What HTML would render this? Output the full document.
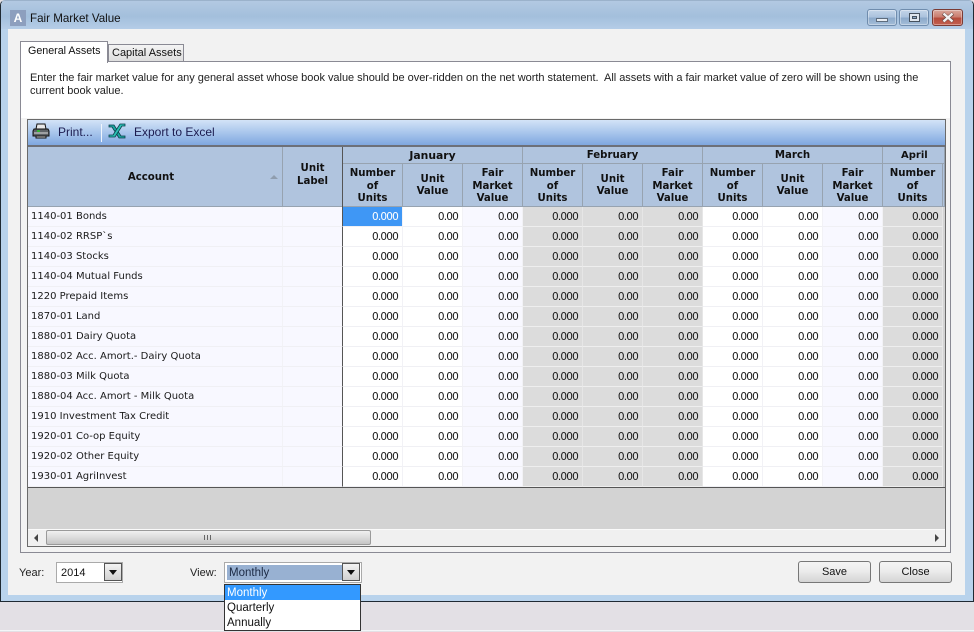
<!DOCTYPE html>
<html><head><meta charset="utf-8"><style>
html,body{margin:0;padding:0}
body{width:974px;height:632px;overflow:hidden;position:relative;background:#e3e0e5;font-family:"DejaVu Sans",sans-serif;color:#111}
div,span{position:absolute;white-space:nowrap}
.l{font-family:"Liberation Sans",sans-serif;font-size:11px;line-height:14px}
.t{font-size:12px}
.m{font-size:11.5px}
table{border-collapse:separate;border-spacing:0;table-layout:fixed;position:absolute;left:0;top:0;width:917px}
td{padding:1px 4px 0 0;box-sizing:content-box;height:18px;border-bottom:1px solid #f0f0f4;border-right:1px solid #f2f2f6;font-size:10.5px;line-height:18px;letter-spacing:-.8px;text-align:right;overflow:hidden;white-space:nowrap;background:#fff;color:#1a1a1a}
td.a{text-align:left;padding:1px 0 0 3px;background:#f8f8ff;letter-spacing:0;font-size:10px}
td.u{background:#f8f8ff}
td.k{border-right:1px solid #555}
td.g{background:#f8f8ff}
td.d{background:#dcdcdc;border-bottom:1px solid #eee;border-right:1px solid #e6e6e6}
td.s{background:#3f97f5;color:#fff}
.h{background:#b0c4de;font-weight:bold;font-size:10.2px;line-height:12.5px;text-align:center;color:#111;white-space:normal;border-right:1px solid #97a3b0;border-bottom:1px solid #97a3b0;box-sizing:border-box;display:flex;align-items:center;justify-content:center;padding-top:4px}
.mo{padding-top:3px}
.w{height:17px;top:9px;border-radius:3px;box-sizing:border-box;border:1px solid #6f8cad;box-shadow:inset 0 0 0 1px rgba(255,255,255,.35)}
.b{height:22px;border:1px solid #777;border-radius:3px;box-sizing:border-box;background:linear-gradient(#f4f4f4,#ececec 45%,#d4d4d4);text-align:center;line-height:21px;font-family:"Liberation Sans",sans-serif;font-size:11px;color:#111}
.c{width:18px;height:18px;box-sizing:border-box;border:1px solid #555;background:linear-gradient(#f3f3f3,#d0d0d0)}
.c:after{content:"";position:absolute;left:4px;top:6px;border:4px solid transparent;border-top:5px solid #111;border-bottom:0}
</style></head><body>
<div style="left:0;top:0;width:974px;height:602px;background:#b9d3ec;border:1px solid #1f2a33;border-top-color:#9bb2cb;box-sizing:border-box;border-radius:5px 5px 0 0"></div>
<div style="left:1px;top:1px;width:972px;height:28px;background:linear-gradient(#b3c9e2,#a3bfdc 55%,#b5cde7);border-radius:4px 4px 0 0"></div>
<div style="left:8px;top:29px;width:957px;height:566px;background:#f2f2f2"></div>
<div style="left:10px;top:10px;width:16px;height:16px;background:#8d9fbe;color:#fff;font:bold 12px/16px 'Liberation Sans',sans-serif;text-align:center">A</div>
<div class="l" style="left:30px;top:12px;font-size:11.6px;color:#111">Fair Market Value</div>

<div class="w" style="left:867px;width:30px;background:linear-gradient(#c3d5e9,#a9c1dc 50%,#8ba9ca 52%,#a4bdd8)"><div style="left:8px;top:8px;width:12px;height:4px;background:#e8edf3;border:1px solid #5d6c7d;box-sizing:border-box"></div></div>
<div class="w" style="left:899px;width:30px;background:linear-gradient(#c3d5e9,#a9c1dc 50%,#8ba9ca 52%,#a4bdd8)"><div style="left:9px;top:3px;width:11px;height:9px;background:#dfe6ee;border:1px solid #46525f;box-sizing:border-box"><div style="left:2px;top:2px;width:5px;height:3px;background:#8ea9c6;border:1px solid #46525f;box-sizing:border-box"></div></div></div>
<div class="w" style="left:932px;width:31px;border-color:#7b3b34;background:linear-gradient(#d9a79c,#c9796a 50%,#b44a3a 52%,#c4604f)"><svg style="position:absolute;left:8px;top:2px" width="14" height="11" viewBox="0 0 14 11"><path d="M2 1.5 L12 9.5 M12 1.5 L2 9.5" stroke="#6a4a44" stroke-width="3.6"/><path d="M2.5 1.5 L11.5 9.5 M11.5 1.5 L2.5 9.5" stroke="#f3f1f1" stroke-width="2.4"/></svg></div>

<div style="left:20px;top:61px;width:931px;height:492px;background:#f3f3f3;border:1px solid #8a8a94;box-sizing:border-box"></div>
<div style="left:21px;top:62px;width:929px;height:56px;background:#fff"></div>
<div style="left:108px;top:44px;width:76px;height:18px;background:linear-gradient(#f4f4f4,#dedede);border:1px solid #8a8a94;box-sizing:border-box"></div>
<div class="l" style="left:112px;top:46px;color:#111">Capital Assets</div>
<div style="left:20px;top:41px;width:88px;height:22px;background:#fff;border:1px solid #8a8a94;border-bottom:0;box-sizing:border-box"></div>
<div class="l" style="left:28px;top:44px;color:#111;font-size:10.7px">General Assets</div>
<div class="l" style="left:30px;top:71px;color:#222;letter-spacing:-.027px">Enter the fair market value for any general asset whose book value should be over-ridden on the net worth statement.&nbsp; All assets with a fair market value of zero will be shown using the</div>
<div class="l" style="left:30px;top:84px;color:#222">current book value.</div>

<div style="left:27px;top:119px;width:919px;height:428px;background:#d3d3d3;border:1px solid #6a6a6a;box-sizing:border-box"></div>
<div style="left:28px;top:120px;width:917px;height:25px;background:linear-gradient(#d3e3f7,#a9c6ec 50%,#7fa7df)"></div>
<div style="left:28px;top:145px;width:917px;height:2px;background:#6d7078"></div>
<svg style="position:absolute;left:32px;top:122px" width="18" height="18" viewBox="0 0 18 18"><path d="M5 2h8l1 5H4z" fill="#e8e8e8" stroke="#111"/><path d="M2 7h14l1 2v5H1V9z" fill="#5e6266" stroke="#111"/><path d="M2 11h14" stroke="#ddd"/><path d="M4 14h10v2H4z" fill="#ccc" stroke="#111"/><path d="M5 9h3" stroke="#2c2" stroke-width="1.5"/></svg>
<div class="l t" style="left:58px;top:125px;color:#1c1c50">Print...</div>
<div style="left:101px;top:124px;width:1px;height:18px;background:#f0f6fd"></div>
<svg style="position:absolute;left:108px;top:123px" width="18" height="16" viewBox="0 0 18 16"><path d="M1 2h5l7 11h4v2h-6L4 4H1z" fill="#1aa6a0" stroke="#0b3f4a" stroke-width=".8"/><path d="M12 1h5v2h-3L7 14H1v-2h4z" fill="#2bbfb3" stroke="#0b3f4a" stroke-width=".8"/></svg>
<div class="l t" style="left:134px;top:125px;color:#1c1c50">Export to Excel</div>

<div class="h" style="left:28px;top:147px;width:255px;height:60px;padding-right:8px">Account</div>
<div style="left:270px;top:175px;border:4px solid transparent;border-bottom:4px solid #8f9dae;border-top:0"></div>
<div class="h" style="left:283px;top:147px;width:60px;height:60px;padding-top:0;padding-bottom:2px">Unit<br>Label</div>
<div style="left:343px;top:147px;width:602px;height:60px;overflow:hidden">
<div class="h" style="left:0;top:0;width:180px;height:17px;font-size:10.8px;padding-top:2px">January</div>
<div class="h mo" style="left:180px;top:0;width:180px;height:17px">February</div>
<div class="h mo" style="left:360px;top:0;width:180px;height:17px">March</div>
<div class="h mo" style="left:540px;top:0;width:62px;height:17px;justify-content:flex-start;padding-left:18px;font-size:10px">April</div>
<div class="h" style="left:0;top:17px;width:60px;height:43px">Number<br>of<br>Units</div>
<div class="h" style="left:60px;top:17px;width:60px;height:43px;padding-top:2px">Unit<br>Value</div>
<div class="h" style="left:120px;top:17px;width:60px;height:43px">Fair<br>Market<br>Value</div>
<div class="h" style="left:180px;top:17px;width:60px;height:43px">Number<br>of<br>Units</div>
<div class="h" style="left:240px;top:17px;width:60px;height:43px;padding-top:2px">Unit<br>Value</div>
<div class="h" style="left:300px;top:17px;width:60px;height:43px">Fair<br>Market<br>Value</div>
<div class="h" style="left:360px;top:17px;width:60px;height:43px">Number<br>of<br>Units</div>
<div class="h" style="left:420px;top:17px;width:60px;height:43px;padding-top:2px">Unit<br>Value</div>
<div class="h" style="left:480px;top:17px;width:60px;height:43px">Fair<br>Market<br>Value</div>
<div class="h" style="left:540px;top:17px;width:60px;height:43px">Number<br>of<br>Units</div>
<div class="h" style="left:600px;top:17px;width:2px;height:43px;padding:0"></div>
</div>
<div style="left:342px;top:147px;width:1px;height:60px;background:#555"></div>

<div style="left:28px;top:207px;width:917px;height:281px;overflow:hidden;background:#d3d3d3">
<table><colgroup><col style="width:255px"><col style="width:60px"><col span="10" style="width:60px"><col style="width:2px"></colgroup>
<tr><td class="a">1140-01 Bonds</td><td class="u k"></td><td class="s">0.000</td><td>0.00</td><td class="g">0.00</td><td class="d">0.000</td><td class="d">0.00</td><td class="d">0.00</td><td>0.000</td><td>0.00</td><td class="g">0.00</td><td class="d">0.000</td></tr>
<tr><td class="a">1140-02 RRSP`s</td><td class="u k"></td><td>0.000</td><td>0.00</td><td class="g">0.00</td><td class="d">0.000</td><td class="d">0.00</td><td class="d">0.00</td><td>0.000</td><td>0.00</td><td class="g">0.00</td><td class="d">0.000</td></tr>
<tr><td class="a">1140-03 Stocks</td><td class="u k"></td><td>0.000</td><td>0.00</td><td class="g">0.00</td><td class="d">0.000</td><td class="d">0.00</td><td class="d">0.00</td><td>0.000</td><td>0.00</td><td class="g">0.00</td><td class="d">0.000</td></tr>
<tr><td class="a">1140-04 Mutual Funds</td><td class="u k"></td><td>0.000</td><td>0.00</td><td class="g">0.00</td><td class="d">0.000</td><td class="d">0.00</td><td class="d">0.00</td><td>0.000</td><td>0.00</td><td class="g">0.00</td><td class="d">0.000</td></tr>
<tr><td class="a">1220 Prepaid Items</td><td class="u k"></td><td>0.000</td><td>0.00</td><td class="g">0.00</td><td class="d">0.000</td><td class="d">0.00</td><td class="d">0.00</td><td>0.000</td><td>0.00</td><td class="g">0.00</td><td class="d">0.000</td></tr>
<tr><td class="a">1870-01 Land</td><td class="u k"></td><td>0.000</td><td>0.00</td><td class="g">0.00</td><td class="d">0.000</td><td class="d">0.00</td><td class="d">0.00</td><td>0.000</td><td>0.00</td><td class="g">0.00</td><td class="d">0.000</td></tr>
<tr><td class="a">1880-01 Dairy Quota</td><td class="u k"></td><td>0.000</td><td>0.00</td><td class="g">0.00</td><td class="d">0.000</td><td class="d">0.00</td><td class="d">0.00</td><td>0.000</td><td>0.00</td><td class="g">0.00</td><td class="d">0.000</td></tr>
<tr><td class="a">1880-02 Acc. Amort.- Dairy Quota</td><td class="u k"></td><td>0.000</td><td>0.00</td><td class="g">0.00</td><td class="d">0.000</td><td class="d">0.00</td><td class="d">0.00</td><td>0.000</td><td>0.00</td><td class="g">0.00</td><td class="d">0.000</td></tr>
<tr><td class="a">1880-03 Milk Quota</td><td class="u k"></td><td>0.000</td><td>0.00</td><td class="g">0.00</td><td class="d">0.000</td><td class="d">0.00</td><td class="d">0.00</td><td>0.000</td><td>0.00</td><td class="g">0.00</td><td class="d">0.000</td></tr>
<tr><td class="a">1880-04 Acc. Amort - Milk Quota</td><td class="u k"></td><td>0.000</td><td>0.00</td><td class="g">0.00</td><td class="d">0.000</td><td class="d">0.00</td><td class="d">0.00</td><td>0.000</td><td>0.00</td><td class="g">0.00</td><td class="d">0.000</td></tr>
<tr><td class="a">1910 Investment Tax Credit</td><td class="u k"></td><td>0.000</td><td>0.00</td><td class="g">0.00</td><td class="d">0.000</td><td class="d">0.00</td><td class="d">0.00</td><td>0.000</td><td>0.00</td><td class="g">0.00</td><td class="d">0.000</td></tr>
<tr><td class="a">1920-01 Co-op Equity</td><td class="u k"></td><td>0.000</td><td>0.00</td><td class="g">0.00</td><td class="d">0.000</td><td class="d">0.00</td><td class="d">0.00</td><td>0.000</td><td>0.00</td><td class="g">0.00</td><td class="d">0.000</td></tr>
<tr><td class="a">1920-02 Other Equity</td><td class="u k"></td><td>0.000</td><td>0.00</td><td class="g">0.00</td><td class="d">0.000</td><td class="d">0.00</td><td class="d">0.00</td><td>0.000</td><td>0.00</td><td class="g">0.00</td><td class="d">0.000</td></tr>
<tr><td class="a">1930-01 AgriInvest</td><td class="u k"></td><td>0.000</td><td>0.00</td><td class="g">0.00</td><td class="d">0.000</td><td class="d">0.00</td><td class="d">0.00</td><td>0.000</td><td>0.00</td><td class="g">0.00</td><td class="d">0.000</td></tr>
</table>
</div>
<div style="left:28px;top:487px;width:917px;height:1px;background:#555"></div>

<div style="left:28px;top:529px;width:917px;height:17px;background:#f0f0f0;border-top:1px solid #fafafa;box-sizing:border-box"></div>
<div style="left:34px;top:534px;border:4px solid transparent;border-right:4px solid #444;border-left:0"></div>
<div style="left:935px;top:534px;border:4px solid transparent;border-left:4px solid #444;border-right:0"></div>
<div style="left:46px;top:530px;width:325px;height:15px;background:linear-gradient(#f0f0f0,#dcdcdc 50%,#c4c4c4);border:1px solid #9a9a9a;box-sizing:border-box;border-radius:2px"></div>
<div style="left:204px;top:535px;width:7px;height:5px;background:repeating-linear-gradient(90deg,#666 0 1px,transparent 1px 3px)"></div>

<div class="l" style="left:19px;top:566px;color:#222">Year:</div>
<div style="left:56px;top:562px;width:67px;height:21px;background:#fff;border:1px solid #aaa;box-sizing:border-box"></div>
<div class="l" style="left:61px;top:566px;color:#111">2014</div>
<div class="c" style="left:104px;top:563px"></div>
<div class="l" style="left:190px;top:566px;color:#222">View:</div>
<div style="left:224px;top:562px;width:138px;height:21px;background:#fff;border:1px solid #aaa;box-sizing:border-box"></div>
<div style="left:227px;top:565px;width:115px;height:15px;background:#98b1d2"></div>
<div class="l m" style="left:229px;top:566px;color:#1c2a44">Monthly</div>
<div class="c" style="left:342px;top:563px"></div>

<div style="left:224px;top:584px;width:137px;height:47px;background:#fff;border:1px solid #333;box-sizing:border-box"></div>
<div style="left:225px;top:585px;width:135px;height:15px;background:#3399ff"></div>
<div class="l m" style="left:227px;top:586px;color:#fff">Monthly</div>
<div class="l m" style="left:227px;top:601px;color:#111">Quarterly</div>
<div class="l m" style="left:227px;top:616px;color:#111">Annually</div>

<div class="b" style="left:798px;top:561px;width:73px">Save</div>
<div class="b" style="left:879px;top:561px;width:73px">Close</div>
<div style="left:361px;top:630px;width:613px;height:1px;background:#f3f6f8"></div>
<div style="left:0;top:630px;width:224px;height:1px;background:#f3f6f8"></div>
</body></html>
